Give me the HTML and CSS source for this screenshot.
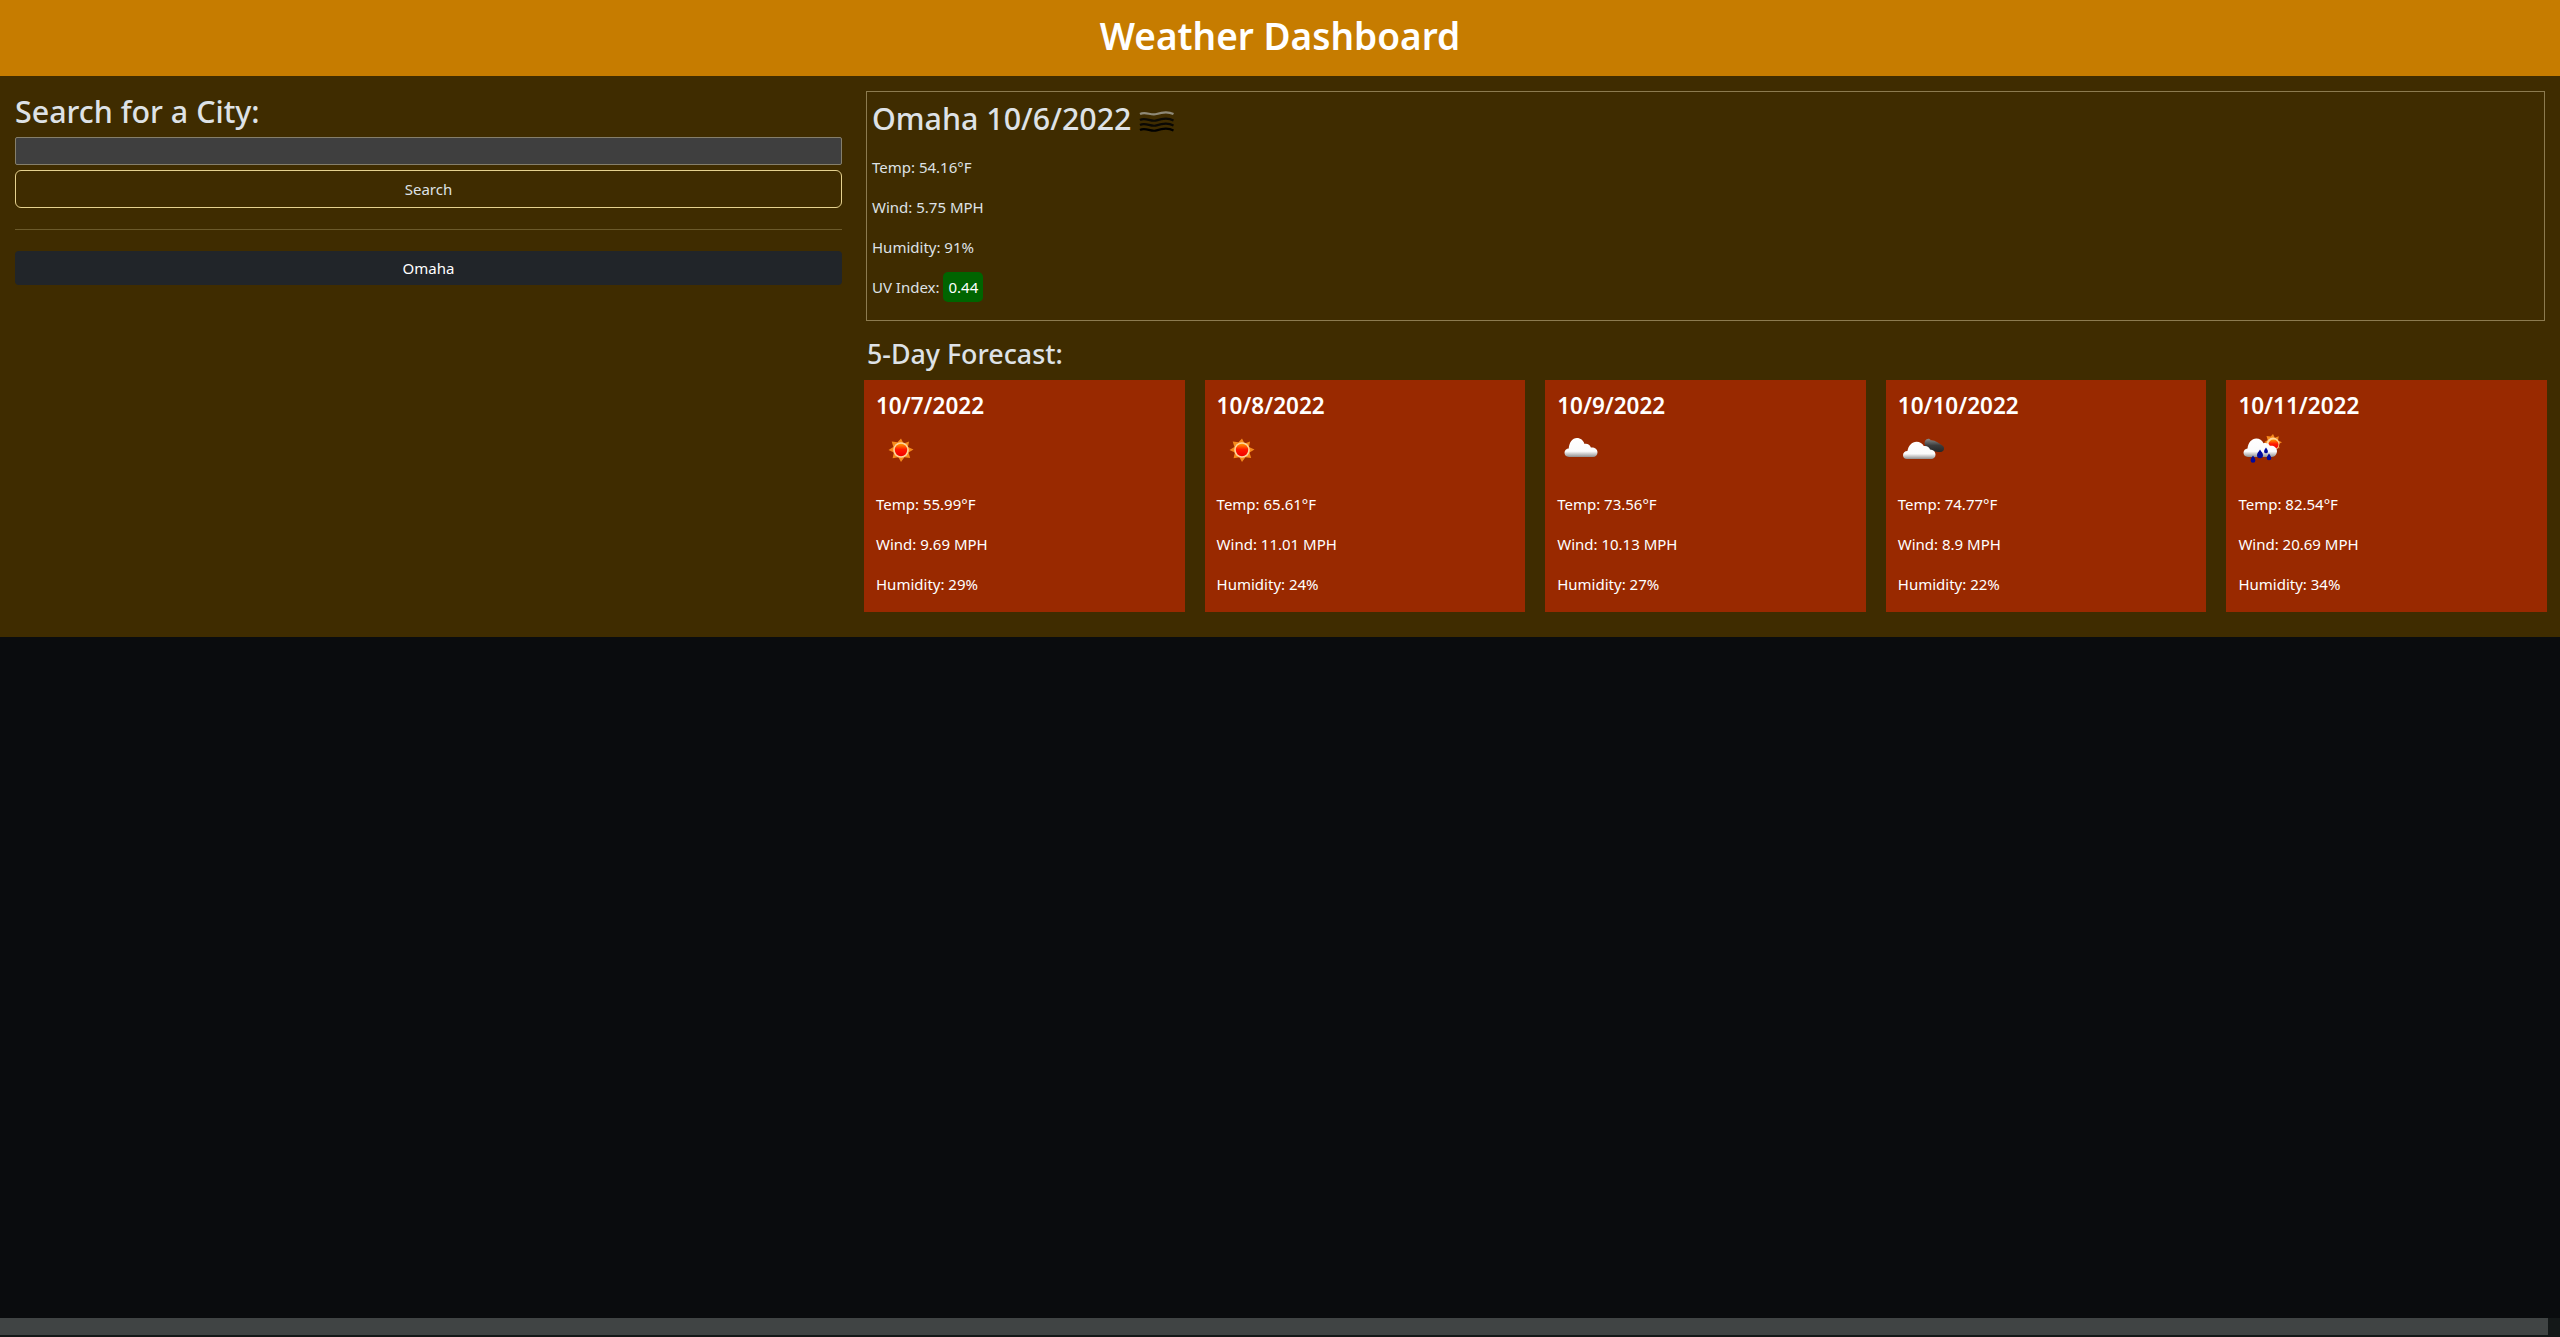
FILE: index.html
```html
<!DOCTYPE html>
<html lang="en">

<head>
    <meta charset="UTF-8">
    <meta name="viewport" content="width=device-width, initial-scale=1.0">
    <title>Weather Dashboard</title>
    <link rel="stylesheet" href="styles.css">
</head>

<body>
    <svg class="defs" width="0" height="0" aria-hidden="true">
        <defs>
            <linearGradient id="sunDisc" x1="0" y1="0" x2="0" y2="1">
                <stop offset="0" stop-color="#ff9a00" />
                <stop offset="0.45" stop-color="#ff1a00" />
                <stop offset="1" stop-color="#f00000" />
            </linearGradient>
            <linearGradient id="cloudWhite" x1="0" y1="0" x2="0" y2="1">
                <stop offset="0" stop-color="#ffffff" />
                <stop offset="0.7" stop-color="#fbfbfb" />
                <stop offset="1" stop-color="#8f8f8f" />
            </linearGradient>
            <linearGradient id="cloudDark" x1="0" y1="0" x2="0" y2="1">
                <stop offset="0" stop-color="#8a8a8a" />
                <stop offset="0.5" stop-color="#3c3c3c" />
                <stop offset="1" stop-color="#262626" />
            </linearGradient>
            <symbol id="sun" viewBox="0 0 50 50">
                <path fill="#f58a1c" d="M25 13.500l2.600 5 5.500-2.100-1.200 5.700 5.600 2.400-5 2.900 1.700 5.500-5.800-.6-3.400 4.700-2.600-4.800-5.800 1 1.300-5.700-5.400-2.400 4.900-3.100-1.700-5.500 5.800.7z" />
                <circle cx="25" cy="25" r="7.800" fill="#ffd59a" />
                <circle cx="25" cy="25" r="6.200" fill="url(#sunDisc)" />
            </symbol>
            <symbol id="cloud" viewBox="0 0 50 50">
                <path fill="url(#cloudWhite)" d="M12 32c-3 0-4.500-2-4.500-4.200 0-2.600 2-4.200 4.200-4.200.4-6 3.700-10.600 8.200-10.600 3.700 0 6.400 2.300 7.600 5.900 3-.6 5.600 1 6.400 3.700 3.600-.4 6.600 1.600 6.600 4.600 0 2.900-2 4.800-4.500 4.800z" />
            </symbol>
            <symbol id="cloudBroken" viewBox="0 0 50 50">
                <path fill="url(#cloudDark)" d="M27 16c1.700-2.500 4.500-3 5.800-.6 3.800-.4 8.800 2.900 12.600 6.200 1.500 2.200.2 5.400-2.500 5.400-3 0-8-1-10.500-1.800-4-1.300-7-5.800-5.400-9.200z" />
                <path fill="url(#cloudWhite)" d="M9 34c-2.500 0-4-1.800-4-3.800 0-2.500 2-4.300 4.400-4.200 1-5.300 4.400-9.300 9.200-9.300 3.200 0 5.900 1.600 7.200 4.400 2.900-.5 5.500 1 6.200 3.400 3.400.2 5.500 2.300 5.500 5.300 0 2.500-1.800 4.200-4.300 4.200z" />
            </symbol>
            <symbol id="rainSun" viewBox="0 0 50 50">
                <path fill="#f58a1c" d="M35 9l1.800 3.700 4-1.400-.8 4.100 4 1.800-3.700 2.100 1.300 4-4.100-.5-2.500 3.300-1.800-3.600-4.100.7.900-4.100-3.900-1.800 3.600-2.200-1.200-4 4.200.5z" />
                <circle cx="35" cy="19" r="6.400" fill="#ffd59a" />
                <circle cx="35.500" cy="19.500" r="5" fill="url(#sunDisc)" />
                <path fill="url(#cloudWhite)" d="M10 32c-2.800 0-4.500-2-4.500-4.200 0-2.400 1.800-4.200 4-4.300.6-5.700 4.200-10 8.800-10 3.300 0 5.900 1.900 7.200 4.800 2.500-1 5.500 0 6.400 2.500 3.600-.6 7.100 1.500 7.100 5.300 0 3.300-2.300 5.900-5 5.900z" />
                <path fill="#020a9c" d="M15 30.600c1.200 2 2.400 3.200 2.400 4.800a2.400 2.400 0 0 1-4.800 0c0-1.600 1.200-2.800 2.400-4.800z" />
                <path fill="#020a9c" d="M22 24.500c1.500 2.400 3 3.800 3 5.700a3 3 0 0 1-6 0c0-1.900 1.500-3.300 3-5.700z" />
                <path fill="#020a9c" d="M28 22.600c.9 1.600 1.900 2.600 1.900 3.800a1.900 1.900 0 0 1-3.800 0c0-1.200 1-2.200 1.900-3.800z" />
                <path fill="#020a9c" d="M31 28.500c1.100 1.900 2.300 3 2.300 4.500a2.300 2.300 0 0 1-4.600 0c0-1.500 1.200-2.600 2.300-4.500z" />
            </symbol>
            <symbol id="mist" viewBox="0 0 50 50">
                <g fill="none" stroke-width="2.200">
                    <path stroke="#8f8a78" d="M8 20c5.500-3 11 1.800 16.500 0s11-3 17 0" />
                    <path stroke="#0d0b05" d="M8 26c5.500-3 11 2.200 16.500 .4s11-3 17 0" />
                    <path stroke="#0a0804" d="M8 31c5.500-3 11 2.200 16.500 .4s11-3 17 0" />
                    <path stroke="#000000" d="M8 36c5.500-3 11 2.200 16.500 .4s11-3 17 0" />
                </g>
            </symbol>
        </defs>
    </svg>

    <header class="page-header">
        <h1>Weather Dashboard</h1>
    </header>

    <main class="content">
        <aside class="search-col">
            <h2>Search for a City:</h2>
            <input class="city-input" type="text" aria-label="City">
            <button class="search-btn" type="button">Search</button>
            <hr>
            <button class="history-btn" type="button">Omaha</button>
        </aside>

        <section class="weather-col">
            <div class="today">
                <h2>Omaha 10/6/2022 <svg class="icon"><use href="#mist" /></svg></h2>
                <p>Temp: 54.16°F</p>
                <p>Wind: 5.75 MPH</p>
                <p>Humidity: 91%</p>
                <p>UV Index: <span class="uv">0.44</span></p>
            </div>

            <h4>5-Day Forecast:</h4>
            <div class="forecast">
                <div class="card">
                    <h5>10/7/2022</h5>
                    <svg class="icon"><use href="#sun" /></svg>
                    <p>Temp: 55.99°F</p>
                    <p>Wind: 9.69 MPH</p>
                    <p>Humidity: 29%</p>
                </div>
                <div class="card">
                    <h5>10/8/2022</h5>
                    <svg class="icon"><use href="#sun" /></svg>
                    <p>Temp: 65.61°F</p>
                    <p>Wind: 11.01 MPH</p>
                    <p>Humidity: 24%</p>
                </div>
                <div class="card">
                    <h5>10/9/2022</h5>
                    <svg class="icon"><use href="#cloud" /></svg>
                    <p>Temp: 73.56°F</p>
                    <p>Wind: 10.13 MPH</p>
                    <p>Humidity: 27%</p>
                </div>
                <div class="card">
                    <h5>10/10/2022</h5>
                    <svg class="icon"><use href="#cloudBroken" /></svg>
                    <p>Temp: 74.77°F</p>
                    <p>Wind: 8.9 MPH</p>
                    <p>Humidity: 22%</p>
                </div>
                <div class="card">
                    <h5>10/11/2022</h5>
                    <svg class="icon"><use href="#rainSun" /></svg>
                    <p>Temp: 82.54°F</p>
                    <p>Wind: 20.69 MPH</p>
                    <p>Humidity: 34%</p>
                </div>
            </div>
        </section>
    </main>

    <div class="scrollbar">
        <div class="scrollbar-thumb"></div>
    </div>
</body>

</html>
```

FILE: styles.css
```css
* {
    margin: 0;
    padding: 0;
    box-sizing: border-box;
}

html,
body {
    height: 100%;
}

body {
    display: flex;
    flex-direction: column;
    overflow: hidden;
    background-color: #0a0c0e;
    color: #dee2e6;
    font-family: "Noto Sans", "Open Sans", sans-serif;
    font-size: 15px;
    line-height: 24px;
}

.defs {
    position: absolute;
}

.page-header {
    height: 76px;
    background-color: #c67c00;
    color: #fff;
    text-align: center;
}

.page-header h1 {
    font-size: 37px;
    font-weight: 600;
    line-height: 72px;
}

.content {
    display: flex;
    height: 561px;
    background-color: #3f2c00;
}

.search-col {
    width: 853px;
    padding: 17px 11px 0 15px;
}

.search-col h2 {
    font-size: 30.4px;
    font-weight: 500;
    line-height: 38px;
    margin-bottom: 6px;
}

.city-input {
    display: block;
    width: 100%;
    height: 28px;
    background-color: #3f3f3f;
    border: 1px solid #857f6c;
    border-radius: 2px;
}

.search-btn {
    display: block;
    width: 100%;
    height: 38px;
    margin-top: 5px;
    background: transparent;
    border: 1px solid #e6d28f;
    border-radius: 6px;
    color: #dee2e6;
    font: inherit;
}

.search-col hr {
    margin: 21px 0;
    border: 0;
    border-top: 1px solid #6b5a2b;
}

.history-btn {
    display: block;
    width: 100%;
    height: 34px;
    background-color: #212529;
    border: 0;
    border-radius: 4px;
    color: #fff;
    font: inherit;
}

.weather-col {
    flex: 1;
    min-width: 0;
    padding: 15px 13px 0 11px;
}

.today {
    height: 230px;
    margin: 0 2px 0 2px;
    padding: 3px 5px;
    border: 1px solid #8c7b50;
}

.today h2 {
    display: flex;
    align-items: center;
    gap: 1px;
    height: 48px;
    margin-bottom: 12px;
    font-size: 30.4px;
    font-weight: 500;
}

.today p {
    margin-bottom: 16px;
}

.uv {
    display: inline-block;
    padding: 3px 5px;
    margin: -3px 0;
    background-color: #006400;
    border-radius: 5px;
    color: #fff;
}

.icon {
    display: block;
    flex: none;
    width: 50px;
    height: 50px;
}

.weather-col h4 {
    margin: 16px 0 9px 3px;
    font-size: 26.8px;
    font-weight: 500;
    line-height: 34px;
}

.forecast {
    display: flex;
    gap: 20px;
}

.card {
    flex: 1;
    min-width: 0;
    height: 232px;
    padding: 11px 12px 0;
    background-color: #992900;
    color: #fff;
}

.card h5 {
    margin-bottom: 5px;
    font-size: 22.5px;
    font-weight: 600;
    line-height: 29px;
}

.card .icon {
    margin-bottom: 17px;
}

.card p {
    margin-bottom: 16px;
}

.scrollbar {
    flex: none;
    height: 19px;
    margin-top: auto;
    background-color: #141818;
}

.scrollbar-thumb {
    width: 2548px;
    height: 17px;
    background-color: #404444;
}
```
